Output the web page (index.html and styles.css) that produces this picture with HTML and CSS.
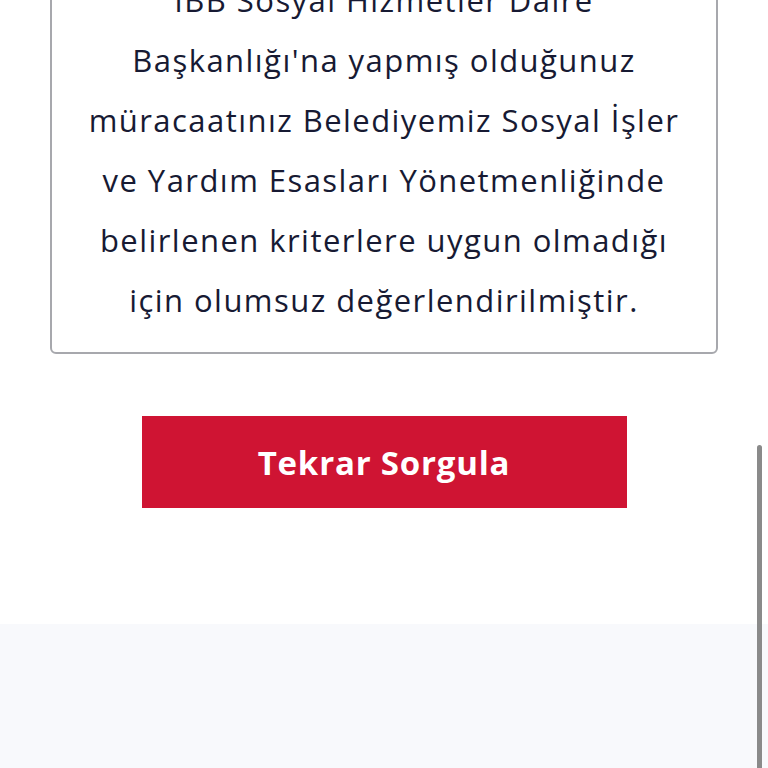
FILE: index.html
```html
<!DOCTYPE html>
<html lang="tr">
<head>
    <meta charset="UTF-8">
    <meta name="viewport" content="width=device-width, initial-scale=1.0">
    <title>Başvuru Sorgulama</title>
    <link rel="stylesheet" href="styles.css">
</head>
<body>
    <main class="result">
        <div class="result-card">
            <p>İBB Sosyal Hizmetler Daire<br>
            Başkanlığı'na yapmış olduğunuz<br>
            müracaatınız Belediyemiz Sosyal İşler<br>
            ve Yardım Esasları Yönetmenliğinde<br>
            belirlenen kriterlere uygun olmadığı<br>
            için olumsuz değerlendirilmiştir.</p>
        </div>
        <button class="retry-btn" type="button">Tekrar Sorgula</button>
    </main>

    <footer class="site-footer"></footer>

    <div class="scroll-thumb"></div>
</body>
</html>
```

FILE: styles.css
```css
/* Global Styles */
body {
    font-family: 'Open Sans', 'Noto Sans', sans-serif;
    margin: 0;
    padding: 0;
    background-color: #fff;
    color: #171a33;
}

.result {
    margin-top: -56px;
    padding: 0 50px 116px;
    display: flex;
    flex-direction: column;
    align-items: center;
}

.result-card {
    box-sizing: border-box;
    width: 100%;
    border: 2px solid #a7a8ad;
    border-radius: 6px;
    padding: 24px 10px 22px;
    text-align: center;
}

.result-card p {
    margin: 0;
    font-size: 31px;
    line-height: 60px;
    letter-spacing: 1.45px;
    white-space: nowrap;
}

.retry-btn {
    margin-top: 62px;
    width: 485px;
    height: 92px;
    border: none;
    border-radius: 0;
    background-color: #cf1433;
    color: #fff;
    font-family: inherit;
    font-size: 33px;
    font-weight: 700;
    letter-spacing: 0.8px;
    cursor: pointer;
}

.site-footer {
    background-color: #f8f9fc;
    height: 200px;
}

/* overlay scrollbar thumb */
.scroll-thumb {
    position: fixed;
    top: 445px;
    right: 6px;
    width: 5px;
    height: 330px;
    border-radius: 3px;
    background-color: #8a8a8a;
}
```
